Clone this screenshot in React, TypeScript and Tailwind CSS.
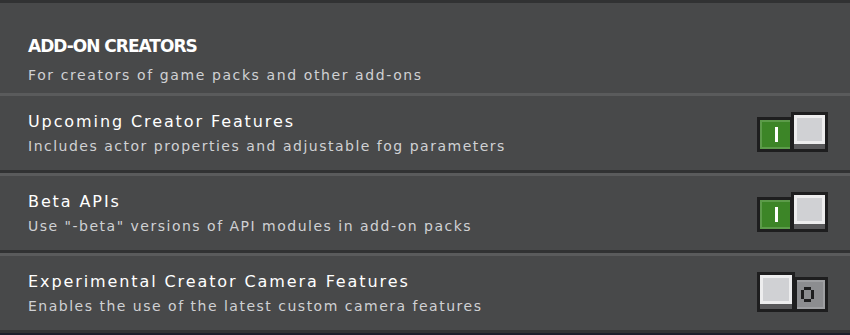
import React from 'react';

type Row = { title: string; desc: string; on: boolean };

const rows: Row[] = [
  { title: 'Upcoming Creator Features', desc: 'Includes actor properties and adjustable fog parameters', on: true },
  { title: 'Beta APIs', desc: 'Use "-beta" versions of API modules in add-on packs', on: true },
  { title: 'Experimental Creator Camera Features', desc: 'Enables the use of the latest custom camera features', on: false },
];

const font = { fontFamily: '"DejaVu Sans", "Liberation Sans", sans-serif' };

// white knob with bevelled face
const Knob = ({ className }: { className: string }) => (
  <div className={`relative z-10 flex flex-col border-[3px] border-[#1e1e1f] ${className}`}>
    <div className="flex-1 border-[3px] border-[#ededee] bg-[#d0d1d4]" />
    <div className="h-[5px] bg-[#58585a]" />
  </div>
);

const Toggle = ({ on }: { on: boolean }) =>
  on ? (
    <div className="flex items-end">
      <div className="h-[35px] w-[36px] border-[3px] border-[#1e1e1f] bg-[#3c8527]">
        <div className="flex h-full w-full items-center justify-center border-y-2 border-l-2 border-[#5c9b4a]">
          <div className="h-[15px] w-[3px] bg-white" />
        </div>
      </div>
      <Knob className="-ml-[2px] h-[40px] w-[37px]" />
    </div>
  ) : (
    <div className="flex items-end">
      <Knob className="h-[40px] w-[38px]" />
      <div className="-ml-[1px] h-[35px] w-[34px] border-[3px] border-[#1e1e1f] bg-[#8c8d90]">
        <div className="flex h-full w-full items-center pl-[4px] border-y-2 border-r-2 border-[#9e9fa2]">
          <svg width="13" height="15" viewBox="0 0 13 15" fill="#1e1e1f">
            <rect x="3" y="0" width="7" height="3" />
            <rect x="3" y="12" width="7" height="3" />
            <rect x="0" y="3" width="3" height="9" />
            <rect x="10" y="3" width="3" height="9" />
          </svg>
        </div>
      </div>
    </div>
  );

export default function App() {
  return (
    <div className="h-[335px] w-[850px] overflow-hidden bg-[#1b1e2b]" style={font}>
      <div className="h-[3px] bg-[#313233]" />

      {/* section header */}
      <div className="h-[90px] bg-[#48494a] px-7 pt-[32px]">
        <div className="text-[17px] leading-[22px] font-bold uppercase tracking-[-1px] text-white">Add-On Creators</div>
        <div className="mt-[9px] text-[14px] leading-[18px] tracking-[1.6px] text-[#d0d1d4]">
          For creators of game packs and other add-ons
        </div>
      </div>

      {rows.map((r) => (
        <div
          key={r.title}
          className="flex h-[80px] items-center justify-between border-t-[3px] border-b-[3px] border-t-[#5a5b5c] border-b-[#313233] bg-[#48494a] pl-7 pr-[22px]"
        >
          <div className="flex flex-col gap-[5px] pt-[1px]">
            <div className="text-[16px] leading-[20px] tracking-[1.9px] text-white">{r.title}</div>
            <div className="text-[14px] leading-[18px] tracking-[1.5px] text-[#d0d1d4]">{r.desc}</div>
          </div>
          <div className="-mt-[3px]">
            <Toggle on={r.on} />
          </div>
        </div>
      ))}
    </div>
  );
}
